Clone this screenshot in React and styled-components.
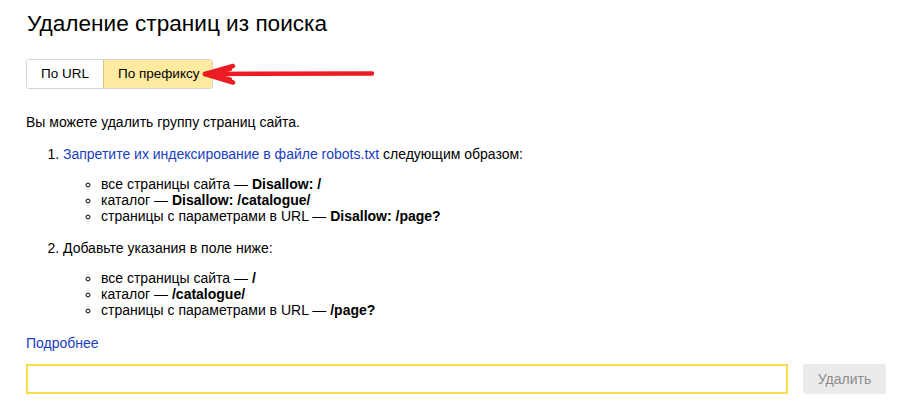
import React from "react";
import styled, { createGlobalStyle } from "styled-components";

const Global = createGlobalStyle`
  html, body { margin: 0; padding: 0; background: #fff; }
  body { font-family: "Liberation Sans", Arial, sans-serif; color: #000; }
`;

const Page = styled.div`
  position: relative;
  width: 900px;
  height: 406px;
  box-sizing: border-box;
  padding: 11px 14px 0 26px;
  overflow: hidden;
`;

const Title = styled.h1`
  margin: 0 0 22px 1px;
  font-size: 22.6px;
  line-height: 26px;
  font-weight: normal;
  color: #000;
`;

const Tabs = styled.div`
  display: inline-flex;
  border: 1px solid #d6d6d6;
  border-radius: 3px;
  overflow: hidden;
  margin-bottom: 25px;
`;

const Tab = styled.button`
  font-family: inherit;
  font-size: 13.5px;
  line-height: 28px;
  height: 28px;
  padding: 0 ${(p) => (p.$active ? "13px" : "14px")} 0 ${(p) => (p.$active ? "14px" : "14px")};
  border: 0;
  border-left: ${(p) => (p.$first ? "0" : "1px solid #d6c47c")};
  background: ${(p) => (p.$active ? "#ffeba0" : "#fff")};
  color: #000;
  cursor: pointer;
`;

const Para = styled.p`
  margin: 0 0 16px;
  font-size: 14px;
  line-height: 16px;
`;

const Steps = styled.ol`
  margin: 0;
  padding-left: 37px;
  font-size: 14px;
  line-height: 16px;
`;

const Step = styled.li`
  margin-bottom: 16px;
`;

const Sub = styled.ul`
  list-style: circle;
  margin: 14px 0 0;
  padding-left: 38px;
`;

const Link = styled.a`
  color: #1a3dc1;
  text-decoration: none;
`;

const More = styled.div`
  margin-top: 17px;
  font-size: 14px;
  line-height: 16px;
`;

const Form = styled.div`
  display: flex;
  align-items: center;
  gap: 15px;
  margin-top: 13px;
`;

const Input = styled.input`
  width: 762px;
  height: 30px;
  box-sizing: border-box;
  border: 2px solid #ffdb4d;
  outline: none;
  padding: 0 8px;
  font-family: inherit;
  font-size: 14px;
`;

const Button = styled.button`
  width: 83px;
  height: 30px;
  border: 0;
  border-radius: 3px;
  background: #ebebeb;
  color: #8c8c8c;
  font-family: inherit;
  font-size: 14px;
`;

const Arrow = styled.svg`
  position: absolute;
  left: 196px;
  top: 58px;
`;

export default function App() {
  return (
    <>
      <Global />
      <Page>
        <Title>Удаление страниц из поиска</Title>
        <Tabs>
          <Tab $first>По URL</Tab>
          <Tab $active>По префиксу</Tab>
        </Tabs>
        <Para>Вы можете удалить группу страниц сайта.</Para>
        <Steps>
          <Step>
            <Link href="#">Запретите их индексирование в файле robots.txt</Link> следующим образом:
            <Sub>
              <li>все страницы сайта — <b>Disallow: /</b></li>
              <li>каталог — <b>Disallow: /catalogue/</b></li>
              <li>страницы с параметрами в URL — <b>Disallow: /page?</b></li>
            </Sub>
          </Step>
          <Step>
            Добавьте указания в поле ниже:
            <Sub>
              <li>все страницы сайта — <b>/</b></li>
              <li>каталог — <b>/catalogue/</b></li>
              <li>страницы с параметрами в URL — <b>/page?</b></li>
            </Sub>
          </Step>
        </Steps>
        <More>
          <Link href="#">Подробнее</Link>
        </More>
        <Form>
          <Input />
          <Button>Удалить</Button>
        </Form>
        <Arrow width="184" height="32" viewBox="0 0 184 32">
          <g stroke="#ec1c24" strokeWidth="4.5" strokeLinecap="round" fill="none">
            <path d="M9 16 L176 15.5" />
            <path d="M9 16 L37 8" />
            <path d="M9 16 L37 24.5" />
            <path d="M14 15 L34 11" />
            <path d="M14 17 L34 21.5" />
          </g>
        </Arrow>
      </Page>
    </>
  );
}
